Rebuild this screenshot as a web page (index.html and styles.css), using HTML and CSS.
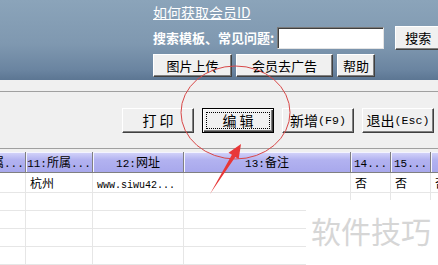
FILE: index.html
```html
<!DOCTYPE html>
<html lang="zh">
<head>
<meta charset="utf-8">
<link rel="stylesheet" href="styles.css">
<title>会员资料</title>
</head>
<body>
<div id="head">
  <a class="link" href="#">如何获取会员ID</a>
  <div class="search">
    <b>搜索模板、常见问题:</b>
    <input type="text" class="box">
    <span class="btn go">搜索</span>
  </div>
  <div class="tools">
    <span class="btn w79">图片上传</span>
    <span class="btn w97">会员去广告</span>
    <span class="btn w38">帮助</span>
  </div>
</div>
<div id="gap"></div>
<div id="bar">
  <span class="btn big">打 印</span>
  <span class="btn big def"><i>编 辑</i></span>
  <span class="btn big">新增<span class="en">(F9)</span></span>
  <span class="btn big">退出<span class="en">(Esc)</span></span>
</div>
<div id="grid">
  <div class="rows">
    <div class="hd"><span class="m">10:</span>所属<span class="m">...</span></div>
    <div class="hd"><span class="m">11:</span>所属<span class="m">...</span></div>
    <div class="hd"><span class="m">12:</span>网址</div>
    <div class="hd"><span class="m">13:</span>备注</div>
    <div class="hd"><span class="m">14...</span></div>
    <div class="hd"><span class="m">15...</span></div>
    <div class="hd"><span class="m">16...</span></div>

    <div class="td"></div><div class="td">杭州</div><div class="td"><span class="m">www.siwu42...</span></div><div class="td"></div><div class="td">否</div><div class="td">否</div><div class="td">否</div>
    <div class="td"></div><div class="td"></div><div class="td"></div><div class="td"></div><div class="td"></div><div class="td"></div><div class="td"></div>
    <div class="td"></div><div class="td"></div><div class="td"></div><div class="td"></div><div class="td"></div><div class="td"></div><div class="td"></div>
    <div class="td"></div><div class="td"></div><div class="td"></div><div class="td"></div><div class="td"></div><div class="td"></div><div class="td"></div>
    <div class="td"></div><div class="td"></div><div class="td"></div><div class="td"></div><div class="td"></div><div class="td"></div><div class="td"></div>
  </div>
</div>
<div id="mark">软件技巧</div>
<svg id="note" width="438" height="265" viewBox="0 0 438 265">
  <ellipse cx="235.5" cy="112.5" rx="54.5" ry="46.5" fill="none" stroke="#d84848" stroke-width="1"/>
  <polygon points="241,144 238.7,159.1 235.3,156.9 210,194 231.9,154.8 228.5,152.7" fill="#e83838"/>
</svg>
</body>
</html>
```

FILE: styles.css
```css
*            {box-sizing:border-box;margin:0;padding:0;}
BODY         {width:438px;height:265px;overflow:hidden;position:relative;background:#f0f0f0;font:12px/1.2 "Noto Sans CJK SC","Liberation Sans",sans-serif;color:#000;}

#head        {height:80px;padding:3px 0 0 153px;color:#fff;background:linear-gradient(#8ba4ba,#7f98b0 55%,#6a84a0 88%,#5c7693);}
.link        {display:block;font-size:14px;line-height:18px;color:#fff;text-decoration:underline;}
.search      {display:flex;align-items:center;height:26px;margin-top:4px;white-space:nowrap;}
.search b    {font-size:13px;}
.box         {width:107px;height:22px;margin-left:3px;background:#fff;border:1px solid;border-color:#7a7a7a #e4e4e4 #e4e4e4 #7a7a7a;box-shadow:inset 1px 1px #404040;}
.tools       {display:flex;gap:4px;margin-top:3px;}
.tools .btn  {height:23px;font-size:13px;}
.w79         {width:79px;}
.w97         {width:97px;}
.w38         {width:38px;}

.btn         {display:flex;align-items:center;justify-content:center;flex:none;background:#f0f0f0;color:#000;white-space:nowrap;border:1px solid;border-color:#fff #404040 #404040 #fff;box-shadow:inset -1px -1px #808080;}
.go          {width:46px;height:24px;margin-left:11px;font-size:13px;}
.big         {width:72px;height:25px;font-size:14px;}
.def         {padding:3px;border-color:#000;box-shadow:inset 1px 1px #fff,inset -1px -1px #404040,inset -2px -2px #808080;}
.def i       {flex:1;align-self:stretch;display:flex;align-items:center;justify-content:center;font-style:normal;border:1px dotted #000;}
.en          {font:11.6px "Liberation Mono",monospace;}

#gap         {height:12px;border-bottom:1px solid #a0a0a0;}
#bar         {display:flex;gap:8px;height:57px;padding:16px 0 0 122px;border-bottom:1px solid #a0a0a0;overflow:hidden;}

#grid        {margin-top:3px;height:113px;overflow:hidden;background:#fff;}
.rows        {display:grid;grid-template-columns:67px 67px 91px 167px 40px 40px 60px;grid-template-rows:21px 20px;grid-auto-rows:18px;width:max-content;margin-left:-41px;}
.hd          {text-align:center;line-height:19px;white-space:nowrap;overflow:hidden;background:linear-gradient(#d6d6fa,#b2b2f0 40%,#a8a8ec);border-right:1px solid #808080;border-bottom:1px solid #808080;box-shadow:inset 1px 1px #f4f4ff;}
.hd .m       {font-size:11px;}
.td          {padding:2px 0 0 4px;line-height:16px;white-space:nowrap;overflow:hidden;border-right:1px solid #e6e6e6;border-bottom:1px solid #e6e6e6;}
.m           {font:10px "Liberation Mono",monospace;}

#mark        {position:absolute;left:306px;top:200px;width:132px;height:65px;padding:12px 0 0 5px;background:#fff;color:#d6d6d6;font-size:30px;line-height:36px;white-space:nowrap;overflow:hidden;}
#note        {position:absolute;left:0;top:0;pointer-events:none;}
```
